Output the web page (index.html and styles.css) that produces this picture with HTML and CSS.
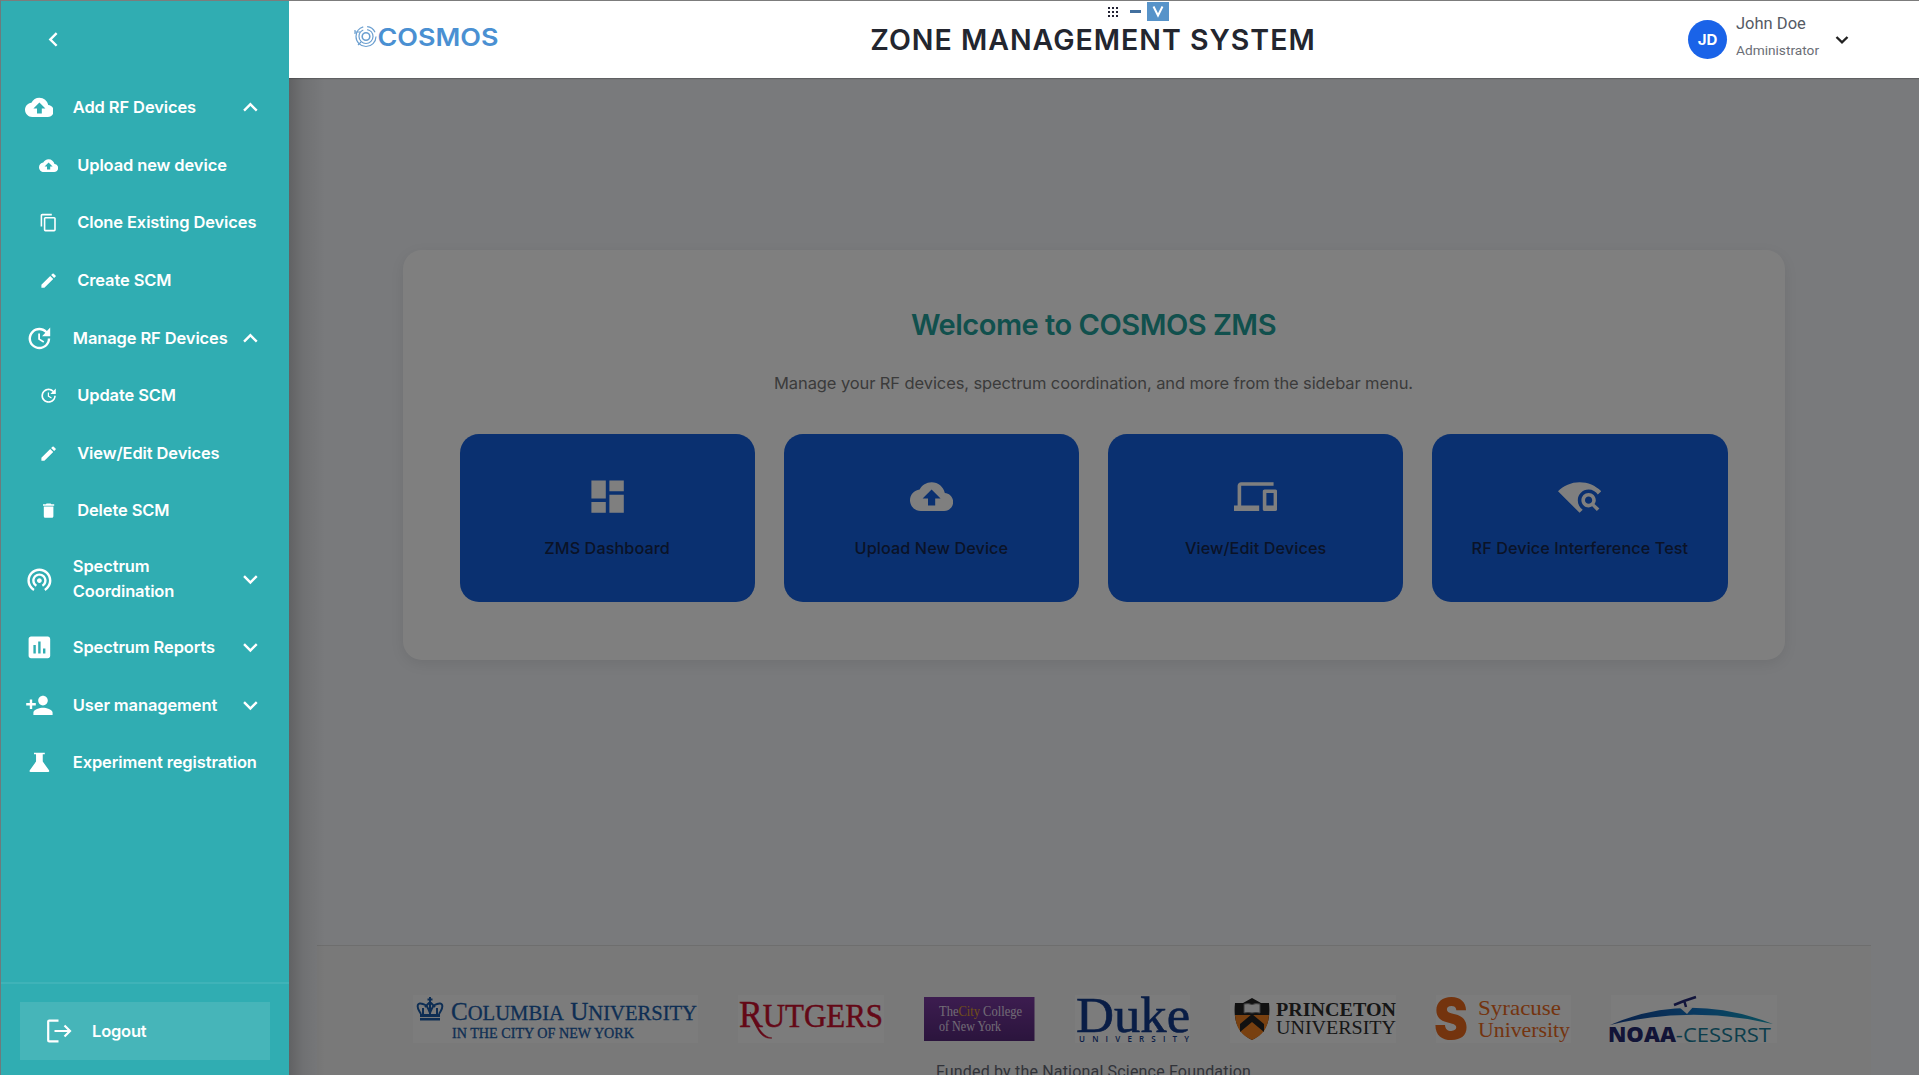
FILE: index.html
```html
<!DOCTYPE html>
<html lang="en">
<head>
<meta charset="utf-8">
<title>Zone Management System</title>
<link rel="stylesheet" href="styles.css">
</head>
<body>
<svg class="defs" aria-hidden="true">
  <symbol id="cloud" viewBox="0 0 24 24"><path d="M19.35 10.04C18.67 6.59 15.64 4 12 4 9.11 4 6.6 5.64 5.35 8.04 2.34 8.36 0 10.91 0 14c0 3.31 2.69 6 6 6h13c2.76 0 5-2.24 5-5 0-2.64-2.05-4.78-4.65-4.96zM14 13v4h-4v-4H7l5-5 5 5h-3z"/></symbol>
  <symbol id="copy" viewBox="0 0 24 24"><path d="M16 1H4c-1.1 0-2 .9-2 2v14h2V3h12V1zm3 4H8c-1.1 0-2 .9-2 2v14c0 1.1.9 2 2 2h11c1.1 0 2-.9 2-2V7c0-1.1-.9-2-2-2zm0 16H8V7h11v14z"/></symbol>
  <symbol id="edit" viewBox="0 0 24 24"><path d="M3 17.25V21h3.75L17.81 9.94l-3.75-3.75L3 17.25zM20.71 7.04c.39-.39.39-1.02 0-1.41l-2.34-2.34c-.39-.39-1.02-.39-1.41 0l-1.83 1.83 3.75 3.75 1.83-1.83z"/></symbol>
  <symbol id="update" viewBox="0 0 24 24"><path d="M21 10.12h-6.78l2.74-2.82c-2.73-2.7-7.15-2.8-9.88-.1-2.73 2.71-2.73 7.08 0 9.79s7.15 2.71 9.88 0C18.32 15.65 19 14.08 19 12.1h2c0 1.98-.88 4.55-2.64 6.29-3.51 3.48-9.21 3.48-12.72 0-3.5-3.47-3.53-9.11-.02-12.58s9.14-3.47 12.65 0L21 3v7.12zM12.5 8v4.25l3.5 2.08-.72 1.21L11 13V8h1.5z"/></symbol>
  <symbol id="trash" viewBox="0 0 24 24"><path d="M6 19c0 1.1.9 2 2 2h8c1.1 0 2-.9 2-2V7H6v12zM19 4h-3.5l-1-1h-5l-1 1H5v2h14V4z"/></symbol>
  <symbol id="tether" viewBox="0 0 24 24"><path d="M12 11c-1.1 0-2 .9-2 2s.9 2 2 2 2-.9 2-2-.9-2-2-2zm6 2c0-3.31-2.69-6-6-6s-6 2.69-6 6c0 2.22 1.21 4.15 3 5.19l1-1.74c-1.19-.7-2-1.97-2-3.45 0-2.21 1.79-4 4-4s4 1.79 4 4c0 1.48-.81 2.75-2 3.45l1 1.74c1.79-1.04 3-2.97 3-5.19zM12 3C6.48 3 2 7.48 2 13c0 3.7 2.01 6.92 4.99 8.65l1-1.73C5.61 18.53 4 15.96 4 13c0-4.42 3.58-8 8-8s8 3.58 8 8c0 2.96-1.61 5.53-4 6.92l1 1.73c2.99-1.73 5-4.95 5-8.65 0-5.52-4.48-10-10-10z"/></symbol>
  <symbol id="report" viewBox="0 0 24 24"><path d="M19 3H5c-1.1 0-2 .9-2 2v14c0 1.1.9 2 2 2h14c1.1 0 2-.9 2-2V5c0-1.1-.9-2-2-2zM9 17H7v-7h2v7zm4 0h-2V7h2v10zm4 0h-2v-4h2v4z"/></symbol>
  <symbol id="adduser" viewBox="0 0 24 24"><path d="M15 12c2.21 0 4-1.79 4-4s-1.79-4-4-4-4 1.79-4 4 1.79 4 4 4zm-9-2V7H4v3H1v2h3v3h2v-3h3v-2H6zm9 4c-2.67 0-8 1.34-8 4v2h16v-2c0-2.66-5.33-4-8-4z"/></symbol>
  <symbol id="flask" viewBox="0 0 24 24"><path d="M7.500 4h9v1.300h-1.700V11.300l5.200 7.200q.7 1.500-.7 1.500H4.700q-1.400 0-.7-1.500l5.200-7.200V5.300H7.500z"/></symbol>
  <symbol id="down" viewBox="0 0 24 24"><path d="M16.59 8.59 12 13.17 7.410 8.590 6 10l6 6 6-6z"/></symbol>
  <symbol id="up" viewBox="0 0 24 24"><path d="m12 8-6 6 1.410 1.410L12 10.830l4.590 4.580L18 14z"/></symbol>
  <symbol id="left" viewBox="0 0 24 24"><path d="M15.410 7.410 14 6l-6 6 6 6 1.410-1.410L10.830 12z"/></symbol>
  <symbol id="dash" viewBox="0 0 24 24"><path d="M3 13h8V3H3v10zm0 8h8v-6H3v6zm10 0h8V11h-8v10zm0-18v6h8V3h-8z"/></symbol>
  <symbol id="devices" viewBox="0 0 24 24"><path d="M4 6h18V4H4c-1.100 0-2 .9-2 2v11H0v3h14v-3H4V6zm19 2h-6c-.55 0-1 .45-1 1v10c0 .55.45 1 1 1h6c.55 0 1-.45 1-1V9c0-.55-.45-1-1-1zm-1 9h-4v-7h4v7z"/></symbol>
  <symbol id="wififind" viewBox="0 0 24 24"><path d="M11 14c0-3.360 2.640-6 6-6 2.200 0 4.080 1.130 5.130 2.860L24 9C20.930 5.900 16.690 4 12 4S3.070 5.900 0 9l12 12 1.750-1.750C12.100 18.200 11 16.300 11 14z"/><path d="M20.270 16.150c.44-.61.730-1.340.730-2.150 0-2.210-1.790-4-4-4s-4 1.790-4 4 1.790 4 4 4c.740 0 1.420-.22 2-.580L21.590 20 23 18.590l-2.730-2.440zM17 16c-1.100 0-2-.9-2-2s.9-2 2-2 2 .9 2 2-.9 2-2 2z"/></symbol>
</svg>

<div class="app">
  <aside class="sidebar">
    <div class="collapse"><svg class="icon"><use href="#left"/></svg></div>
    <nav class="menu">
      <a class="item"><svg class="icon"><use href="#cloud"/></svg><span>Add RF Devices</span><svg class="icon caret"><use href="#up"/></svg></a>
      <a class="item sub"><svg class="icon"><use href="#cloud"/></svg><span>Upload new device</span></a>
      <a class="item sub"><svg class="icon"><use href="#copy"/></svg><span>Clone Existing Devices</span></a>
      <a class="item sub"><svg class="icon"><use href="#edit"/></svg><span>Create SCM</span></a>
      <a class="item"><svg class="icon"><use href="#update"/></svg><span>Manage RF Devices</span><svg class="icon caret"><use href="#up"/></svg></a>
      <a class="item sub"><svg class="icon"><use href="#update"/></svg><span>Update SCM</span></a>
      <a class="item sub"><svg class="icon"><use href="#edit"/></svg><span>View/Edit Devices</span></a>
      <a class="item sub"><svg class="icon"><use href="#trash"/></svg><span>Delete SCM</span></a>
      <a class="item"><svg class="icon"><use href="#tether"/></svg><span>Spectrum<br>Coordination</span><svg class="icon caret"><use href="#down"/></svg></a>
      <a class="item"><svg class="icon"><use href="#report"/></svg><span>Spectrum Reports</span><svg class="icon caret"><use href="#down"/></svg></a>
      <a class="item"><svg class="icon"><use href="#adduser"/></svg><span>User management</span><svg class="icon caret"><use href="#down"/></svg></a>
      <a class="item"><svg class="icon"><use href="#flask"/></svg><span>Experiment registration</span></a>
    </nav>
    <div class="account">
      <a class="logout">
        <svg width="26" height="24" viewBox="0 0 26 24" fill="none" stroke="#fff" stroke-width="2.200"><path d="M12.500 1.600H3.200q-1 0-1 1v18.800q0 1 1 1h9.300M8.500 12h15M18.500 6.500 24 12l-5.500 5.500"/></svg>
        <span>Logout</span>
      </a>
    </div>
  </aside>

  <div class="page">
    <header class="header">
      <svg class="brand" width="146" height="32" viewBox="0 -3 146 32">
        <g fill="none" stroke="#6b9fd0" stroke-width="1.200"><circle cx="12" cy="12.500" r="10" stroke-dasharray="44 4 10 5"/><circle cx="12" cy="12.500" r="7" stroke-dasharray="30 4"/><circle cx="12" cy="12.500" r="3.800" stroke-width="1.600"/><path d="M1 8h5M1 6v4M4 21l3-3"/></g>
        <text class="brand-name" x="23.500" y="21.500" textLength="121" lengthAdjust="spacingAndGlyphs">COSMOS</text>
      </svg>
      <h1 class="title">ZONE MANAGEMENT SYSTEM</h1>
      <div class="user">
        <div class="avatar">JD</div>
        <div class="who"><div class="name">John Doe</div><div class="role">Administrator</div></div>
        <svg class="user-caret" width="14" height="10" viewBox="0 0 14 10" fill="none" stroke="#222" stroke-width="2.400"><path d="M1.500 2 7 7.300 12.500 2"/></svg>
      </div>
      <div class="viewer-bar">
        <svg width="10" height="10" viewBox="0 0 10 10" fill="#223"><path d="M0 0h2v2H0zM4 0h2v2H4zM8 0h2v2H8zM0 4h2v2H0zM4 4h2v2H4zM8 4h2v2H8zM0 8h2v2H0zM4 8h2v2H4zM8 8h2v2H8z"/></svg>
        <i class="minimize"></i>
        <b class="expand"><svg width="22" height="19" viewBox="0 0 22 19" fill="none" stroke="#fff" stroke-width="2"><path d="M6.500 4.500 11 13.500l4.500-9"/></svg></b>
      </div>
    </header>

    <main class="main">
      <section class="welcome">
        <h2 class="heading">Welcome to COSMOS ZMS</h2>
        <p class="lead">Manage your RF devices, spectrum coordination, and more from the sidebar menu.</p>
        <div class="tiles">
          <a class="tile"><svg class="tile-icon"><use href="#dash"/></svg><span>ZMS Dashboard</span></a>
          <a class="tile"><svg class="tile-icon"><use href="#cloud"/></svg><span>Upload New Device</span></a>
          <a class="tile"><svg class="tile-icon"><use href="#devices"/></svg><span>View/Edit Devices</span></a>
          <a class="tile"><svg class="tile-icon"><use href="#wififind"/></svg><span>RF Device Interference Test</span></a>
        </div>
      </section>
      <footer class="footer">
        <div class="logos">
          <svg class="logo" width="285" height="48" viewBox="0 0 285 48">
            <g fill="none" stroke="#1c5da8" stroke-width="2"><path d="M8 19C2 10 5 7 10 9c4 1 5 4 7 9M26 19c6-9 3-12-2-10-4 1-5 4-7 9M17 2v18M14.500 4.500h5M10 13v6M24 13v6M12 12l5-5 5 5"/></g><path fill="#1c5da8" d="M7 19h20v3H7zM7 23h20v2.500H7z"/>
            <g fill="#1c5da8" stroke="#1c5da8" stroke-width=".3" class="serif"><text x="38" y="24.500" font-size="25" textLength="246" lengthAdjust="spacingAndGlyphs">C<tspan font-size="20.500">OLUMBIA</tspan> U<tspan font-size="20.500">NIVERSITY</tspan></text><text x="39" y="42.500" font-size="14" textLength="182" lengthAdjust="spacingAndGlyphs">IN THE CITY OF NEW YORK</text></g>
          </svg>
          <svg class="logo" width="146" height="48" viewBox="0 0 146 48"><g fill="#c8102e" stroke="#c8102e" stroke-width=".5" class="serif"><text x="1" y="31.500" font-size="38" textLength="144" lengthAdjust="spacingAndGlyphs">R<tspan font-size="33">UTGERS</tspan></text><path d="M12 17c7 12 11 25 22 26-12 2-16-12-22-26z"/></g></svg>
          <svg width="111" height="48" viewBox="0 0 111 48">
            <defs><linearGradient id="ccny" x2="0" y2="1"><stop stop-color="#7a3aa0"/><stop offset="1" stop-color="#56297a"/></linearGradient></defs>
            <path fill="url(#ccny)" d="M0 2h110.500v44H0z"/>
            <g class="serif" font-size="14.500" fill="#e2d8ea"><text x="15" y="21" textLength="83" lengthAdjust="spacingAndGlyphs">The<tspan fill="#e0a030">City</tspan> College</text><text x="15" y="36" textLength="62" lengthAdjust="spacingAndGlyphs">of New York</text></g>
          </svg>
          <svg class="logo" width="115" height="48" viewBox="0 0 115 48"><g fill="#123b8c"><text class="serif" x="1" y="37" font-size="50" stroke="#123b8c" stroke-width=".6" textLength="114" lengthAdjust="spacingAndGlyphs">Duke</text><text class="sans" x="4" y="47" font-size="8" font-weight="600" textLength="110">UNIVERSITY</text></g></svg>
          <svg class="logo" width="166" height="48" viewBox="0 0 166 48">
            <path fill="#222" d="M5 8h8l9-5 9 5h8c2 18-3 30-17 37C8 38 3 26 5 8z"/><path fill="#f08020" d="M5 20h34c-1 13-6 20-17 25C11 40 6 33 5 20z"/><path fill="#222" d="m10 29 12-10 12 10v8L22 27l-12 10z"/><path fill="#eee" stroke="#777" d="M14 9q4-1 8 .5 4-1.500 8-.5v9q-4-1-8 0-4-1-8 0z"/>
            <g class="serif" fill="#2c2c2c"><text x="46" y="20.500" font-size="18" font-weight="700" textLength="120" lengthAdjust="spacingAndGlyphs">PRINCETON</text><text x="46" y="39" font-size="18" textLength="120" lengthAdjust="spacingAndGlyphs">UNIVERSITY</text></g>
          </svg>
          <svg class="logo" width="135" height="48" viewBox="0 0 135 48"><g fill="#e8681c"><text class="block" x="-2" y="43.500" font-size="56" textLength="34" lengthAdjust="spacingAndGlyphs">S</text><text class="serif" x="42" y="20" font-size="21" textLength="83" lengthAdjust="spacingAndGlyphs">Syracuse</text><text class="serif" x="42" y="42" font-size="21" textLength="92" lengthAdjust="spacingAndGlyphs">University</text></g></svg>
          <svg class="logo" width="166" height="48" viewBox="3 0 166 48">
            <defs><linearGradient id="arc"><stop stop-color="#123f90"/><stop offset=".55" stop-color="#1275c4"/><stop offset="1" stop-color="#16a0b8"/></linearGradient></defs>
            <path fill="url(#arc)" d="M2 30Q80-4 165 29 84 10 2 30z"/><path fill="#f0f0f0" d="M71 12h14l-6 7z"/><path fill="none" stroke="#252a78" stroke-width="2.500" d="M66 10l10-4 12-4M76 5l2 7"/>
            <text class="sans" x="0" y="47" font-size="20.500" textLength="163" lengthAdjust="spacingAndGlyphs" fill="#24286e" font-weight="800">NOAA<tspan font-weight="500" fill="#187c98">-CESSRST</tspan></text>
          </svg>
        </div>
        <p class="funding">Funded by the National Science Foundation</p>
      </footer>
      <div class="backdrop"></div>
    </main>
  </div>
</div>
</body>
</html>
```
FILE: styles.css
```css
* { box-sizing: border-box; }
html, body { height: 100%; }
body { margin: 0; overflow: hidden; font-family: Inter, sans-serif; }
h1, h2, p { margin: 0; }
.defs { display: none; }

.app {
  display: flex;
  width: 100%;
  height: 100vh;
  overflow: hidden;
  border-top: 1px solid #7c7c7c;
  border-left: 1px solid #6c7b7d;
}

/* Sidebar */
.sidebar {
  position: relative;
  z-index: 2;
  flex: none;
  display: flex;
  flex-direction: column;
  width: 288px;
  background: #30adb2;
  color: #fff;
}
.icon { flex: none; width: 28.8px; height: 28.8px; fill: #fff; }
.collapse { height: 78px; padding: 23.500px 0 0 38px; }
.menu { flex: 1; }
.item {
  display: flex;
  align-items: center;
  min-height: 57.600px;
  padding: 14.300px 24px 14.300px 23.500px;
  font-size: 16.500px;
  font-weight: 600;
  line-height: 25.200px;
  letter-spacing: -0.12px;
  white-space: nowrap;
}
.item > span { margin-left: 19.500px; }
.item .caret { margin-left: auto; }
.item.sub { padding-left: 37.500px; }
.sub .icon { width: 19.200px; height: 19.200px; }
.account { height: 93px; padding: 18px 19px; border-top: 2px solid #3fb3b8; }
.logout {
  display: flex;
  align-items: center;
  gap: 20px;
  width: 250px;
  height: 58px;
  padding-left: 26px;
  background: #46b5b9;
  font-size: 16.500px;
  font-weight: 600;
  letter-spacing: -0.2px;
}

/* Header */
.page { flex: 1; min-width: 0; display: flex; flex-direction: column; }
.header {
  position: relative;
  z-index: 1;
  display: flex;
  align-items: center;
  height: 77px;
  padding: 0 70px 0 65px;
  background: #fff;
  box-shadow: 0 1px 1px rgba(0, 0, 0, .2);
}
.brand { margin-bottom: 6px; overflow: visible; }
.brand-name { font: 600 24px Inter, sans-serif; fill: #4a90d2; }
.title {
  flex: 1;
  padding-right: 2px;
  color: #23262f;
  font-size: 28.500px;
  font-weight: 600;
  letter-spacing: 1px;
  text-align: center;
  white-space: nowrap;
}
.user { display: flex; align-items: center; }
.avatar {
  width: 39px;
  height: 39px;
  border-radius: 50%;
  background: #1a63e8;
  color: #fff;
  font-size: 15px;
  font-weight: 700;
  line-height: 39px;
  text-align: center;
}
.who { width: 94px; margin-left: 9px; font-family: Roboto, sans-serif; white-space: nowrap; }
.name { margin-top: -5px; color: #555a64; font-size: 16.500px; line-height: 26px; }
.role { color: #6b6e76; font-size: 13.700px; line-height: 26px; }
.user-caret { margin-left: 5px; }
.viewer-bar {
  position: absolute;
  top: 1px;
  left: 819px;
  display: flex;
  align-items: center;
}
.minimize { width: 11px; height: 3px; margin: 0 6px 0 12px; background: #42709f; }
.expand { width: 22px; height: 19px; background: #5793c9; }
.expand svg { display: block; }

/* Main area */
.main {
  position: relative;
  flex: 1;
  min-height: 0;
  display: flex;
  flex-direction: column;
  align-items: center;
  justify-content: space-between;
  padding: 172px 48px 0 28px;
  background: #f2f4f8;
}
.backdrop {
  position: absolute;
  inset: 0;
  background:
    linear-gradient(90deg, rgba(0, 0, 0, .2), rgba(0, 0, 0, .08) 14px, transparent 36px),
    rgba(0, 0, 0, .5);
}
.welcome {
  width: 1382px;
  height: 410px;
  margin-left: -1px;
  padding: 56px 57px;
  border-radius: 19px;
  background: #fff;
  box-shadow: 0 4px 14px rgba(0, 0, 0, .08);
  text-align: center;
}
.heading { color: #23a09a; font-size: 29px; font-weight: 600; line-height: 38px; letter-spacing: -0.48px; }
.lead { margin-top: 24px; color: #777; font-size: 16.500px; line-height: 30px; letter-spacing: -0.1px; }
.tiles { display: grid; grid-template-columns: repeat(4, 1fr); gap: 29px; margin-top: 36px; }
.tile {
  display: flex;
  flex-direction: column;
  align-items: center;
  height: 168px;
  padding-top: 41px;
  border-radius: 19px;
  background: #1460e0;
  color: #16264e;
  font-size: 16.200px;
  font-weight: 500;
  letter-spacing: 0.1px;
  white-space: nowrap;
}
.tile-icon { width: 43.200px; height: 43.200px; fill: #fff; }
.tile span { margin-top: 18px; line-height: 24px; }

/* Footer */
.footer {
  align-self: stretch;
  height: 130px;
  padding-top: 49px;
  border-top: 1px solid #dcdcdc;
  background: #f3f3f3;
}
.logos { display: flex; gap: 40px; padding-left: 96px; }
.logo { flex: none; background: #f8f8f8; overflow: visible; }
.logos svg { flex: none; }
.serif { font-family: "Liberation Serif", serif; }
.sans { font-family: "Open Sans", sans-serif; }
.block { font-family: Inter, sans-serif; font-weight: 900; }
.funding {
  margin: 17px 0 0 -1px;
  color: #626672;
  font-family: Roboto, sans-serif;
  font-size: 16px;
  line-height: 24px;
  letter-spacing: 0.18px;
  text-align: center;
}
```
